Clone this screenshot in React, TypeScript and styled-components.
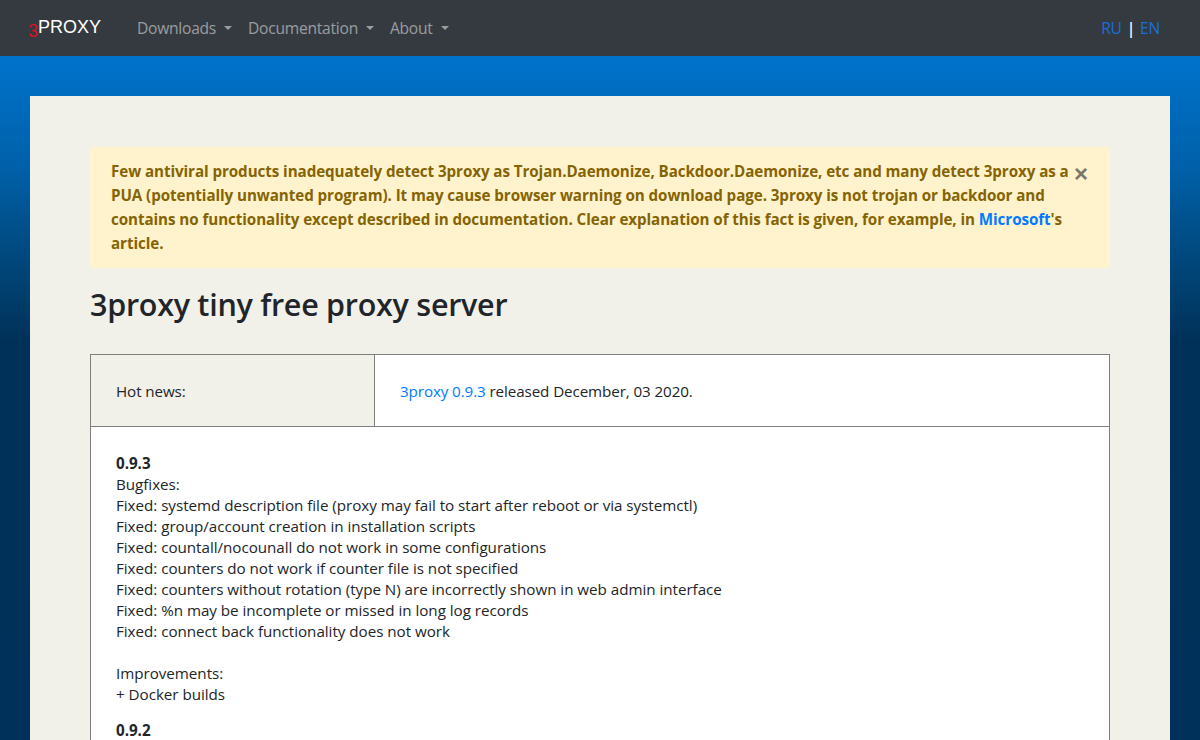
import React from "react";
import styled, { createGlobalStyle } from "styled-components";

const Global = createGlobalStyle`
  html, body { margin: 0; padding: 0; height: 740px; overflow: hidden; }
  body {
    font-family: "Open Sans", "Noto Sans", sans-serif;
    font-size: 15px;
    line-height: 24px;
    color: #212529;
    background: #003259;
  }
  a { text-decoration: none; }
`;

const Page = styled.div`
  height: 740px;
  overflow: hidden;
  background: linear-gradient(180deg, #0073cc 56px, #0060a8 170px, #004a80 250px, #003259 340px, #00315a 740px);
`;

const Navbar = styled.nav`
  height: 56px;
  background: #343a40;
  display: flex;
  align-items: center;
  padding: 0 40px 0 28px;
`;

const Brand = styled.a`
  display: flex;
  align-items: baseline;
  width: 109px;
  font-family: "Liberation Sans", Arial, sans-serif;
  font-size: 18px;
  color: #fff;
  margin-top: -2px;
`;

const BrandDigit = styled.span`
  color: #d4141f;
  font-size: 18px;
  position: relative;
  top: 4px;
`;

const NavList = styled.div`
  display: flex;
  gap: 16px;
  flex: 1;
`;

const NavItem = styled.a`
  display: flex;
  align-items: center;
  color: rgba(255, 255, 255, 0.5);
  font-size: 15.6px;
  letter-spacing: -0.25px;
`;

const Caret = styled.span`
  width: 0;
  height: 0;
  margin-left: 8px;
  border-top: 4.5px solid rgba(255, 255, 255, 0.5);
  border-left: 4.5px solid transparent;
  border-right: 4.5px solid transparent;
`;

const Lang = styled.div`
  display: flex;
  gap: 5px;
  font-size: 15.6px;
  color: #fff;
  letter-spacing: -0.25px;
`;

const LangLink = styled.a`
  color: #1a6fd6;
`;

const Separator = styled.span`
  font-weight: 600;
`;

const Container = styled.main`
  margin: 40px 30px 0;
  height: 644px;
  background: #f1f0e9;
  padding: 51px 60px 0;
`;

const Alert = styled.div`
  position: relative;
  box-sizing: border-box;
  height: 121px;
  padding: 12px 30px 12px 21px;
  background: #fff3cd;
  border-radius: 4px;
  color: #856404;
  font-weight: 700;
  font-size: 15.2px;
  letter-spacing: -0.08px;
  margin-bottom: 16px;
  a { color: #007bff; }
`;

const Close = styled.span`
  position: absolute;
  top: 15px;
  right: 22px;
  color: #7b776a;
  font-family: "Liberation Sans", Arial, sans-serif;
  font-size: 24px;
  font-weight: 700;
  line-height: 24px;
`;

const Title = styled.h1`
  margin: 0 0 29px;
  font-size: 30.5px;
  line-height: 41px;
  font-weight: 600;
  letter-spacing: -0.27px;
`;

const Table = styled.section`
  border: 1px solid #7f7f7f;
  border-bottom: 0;
  font-size: 15.2px;
  letter-spacing: -0.03px;
  line-height: 21px;
`;

const NewsRow = styled.div`
  display: grid;
  grid-template-columns: 283px 1fr;
  height: 71px;
  border-bottom: 1px solid #7f7f7f;
`;

const NewsCell = styled.div<{ $head?: boolean }>`
  display: flex;
  align-items: center;
  white-space: pre;
  letter-spacing: -0.1px;
  padding: 2px 0 0 25px;
  background: ${(p) => (p.$head ? "transparent" : "#fff")};
  border-left: ${(p) => (p.$head ? "0" : "1px solid #7f7f7f")};
  a { color: #007bff; }
`;

const Body = styled.div`
  background: #fff;
  padding: 26px 25px 0;
  height: 320px;
`;

const Version = styled.strong`
  display: block;
  font-weight: 700;
`;

const Line = styled.div`
  height: 21px;
`;

const Spacer = styled.div`
  height: 21px;
`;

const SecondVersion = styled(Version)`
  margin-top: 15px;
`;

const fixes = [
  "Bugfixes:",
  "Fixed: systemd description file (proxy may fail to start after reboot or via systemctl)",
  "Fixed: group/account creation in installation scripts",
  "Fixed: countall/nocounall do not work in some configurations",
  "Fixed: counters do not work if counter file is not specified",
  "Fixed: counters without rotation (type N) are incorrectly shown in web admin interface",
  "Fixed: %n may be incomplete or missed in long log records",
  "Fixed: connect back functionality does not work",
];

export default function App() {
  return (
    <Page>
      <Global />
      <Navbar>
        <Brand href="#"><BrandDigit>3</BrandDigit>PROXY</Brand>
        <NavList>
          <NavItem href="#">Downloads<Caret /></NavItem>
          <NavItem href="#">Documentation<Caret /></NavItem>
          <NavItem href="#">About<Caret /></NavItem>
        </NavList>
        <Lang>
          <LangLink href="#">RU</LangLink><Separator>|</Separator><LangLink href="#">EN</LangLink>
        </Lang>
      </Navbar>
      <Container>
        <Alert>
          Few antiviral products inadequately detect 3proxy as Trojan.Daemonize, Backdoor.Daemonize, etc and many detect 3proxy as a PUA (potentially unwanted program). It may cause browser warning on download page. 3proxy is not trojan or backdoor and contains no functionality except described in documentation. Clear explanation of this fact is given, for example, in <a href="#">Microsoft</a>'s article.
          <Close>×</Close>
        </Alert>
        <Title>3proxy tiny free proxy server</Title>
        <Table>
          <NewsRow>
            <NewsCell $head>Hot news:</NewsCell>
            <NewsCell><a href="#">3proxy 0.9.3</a> released December, 03 2020.</NewsCell>
          </NewsRow>
          <Body>
            <Version>0.9.3</Version>
            {fixes.map((f) => <Line key={f}>{f}</Line>)}
            <Spacer />
            <Line>Improvements:</Line>
            <Line>+ Docker builds</Line>
            <SecondVersion>0.9.2</SecondVersion>
          </Body>
        </Table>
      </Container>
    </Page>
  );
}
